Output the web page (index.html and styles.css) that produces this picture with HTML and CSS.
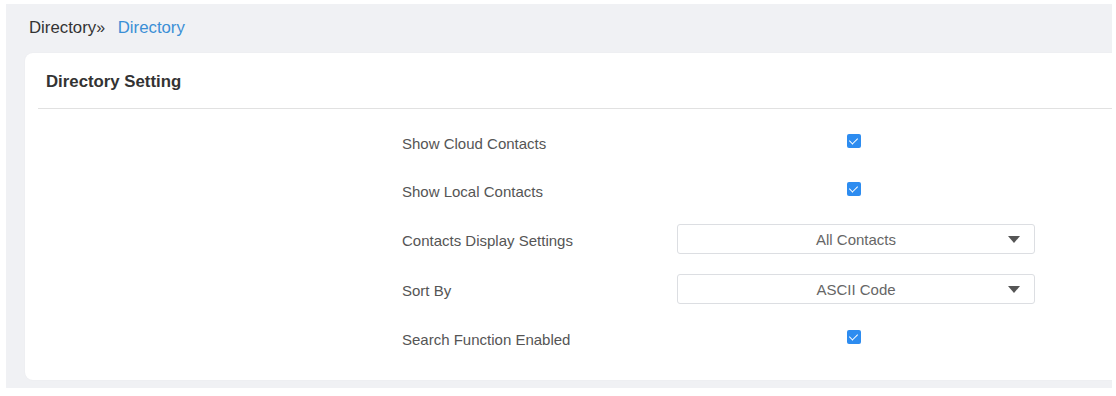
FILE: index.html
```html
<!DOCTYPE html>
<html lang="en">
<head>
    <meta charset="UTF-8">
    <title>Directory</title>
    <link rel="stylesheet" href="styles.css">
</head>
<body>
    <div class="page">
        <div class="breadcrumb">
            <span class="crumb">Directory</span><span class="sep">&raquo;</span>
            <span class="crumb current">Directory</span>
        </div>

        <div class="card">
            <div class="card-header">
                <h2 class="card-title">Directory Setting</h2>
            </div>

            <div class="form">
                <div class="form-row">
                    <label class="form-label">Show Cloud Contacts</label>
                    <div class="form-control">
                        <span class="checkbox checked"></span>
                    </div>
                </div>
                <div class="form-row">
                    <label class="form-label">Show Local Contacts</label>
                    <div class="form-control">
                        <span class="checkbox checked"></span>
                    </div>
                </div>
                <div class="form-row tall">
                    <label class="form-label">Contacts Display Settings</label>
                    <div class="form-control">
                        <div class="select">
                            <span class="select-value">All Contacts</span>
                            <span class="select-arrow"></span>
                        </div>
                    </div>
                </div>
                <div class="form-row tall">
                    <label class="form-label">Sort By</label>
                    <div class="form-control">
                        <div class="select">
                            <span class="select-value">ASCII Code</span>
                            <span class="select-arrow"></span>
                        </div>
                    </div>
                </div>
                <div class="form-row">
                    <label class="form-label">Search Function Enabled</label>
                    <div class="form-control">
                        <span class="checkbox checked"></span>
                    </div>
                </div>
            </div>
        </div>
    </div>
</body>
</html>
```

FILE: styles.css
```css
* {
    margin: 0;
    padding: 0;
    box-sizing: border-box;
    font-family: 'Liberation Sans', Arial, sans-serif;
}

body {
    background-color: #fff;
    padding: 4px 4px 8px 6px;
}

.page {
    background-color: #f0f1f4;
    width: 1106px;
    height: 384px;
    overflow: hidden;
}

.breadcrumb {
    height: 46px;
    line-height: 47px;
    padding-left: 23px;
    font-size: 16.8px;
    color: #333;
}

.breadcrumb .sep {
    margin-right: 8px;
    font-size: 16px;
}

.crumb.current {
    color: #3a8fd6;
}

.card {
    margin: 3px -20px 0 19px;
    background-color: #fff;
    border-radius: 8px;
    padding-bottom: 17px;
    box-shadow: 0 0 2px rgba(0, 0, 0, 0.04);
}

.card-header {
    height: 56px;
    margin-left: 13px;
    padding-left: 8px;
    padding-top: 2px;
    border-bottom: 1px solid #e1e1e1;
    display: flex;
    align-items: center;
}

.card-title {
    font-size: 16.8px;
    font-weight: bold;
    color: #333;
}

.form {
    padding-top: 10px;
}

.form-row {
    height: 48px;
    display: flex;
    align-items: center;
}

.form-row.tall {
    height: 50px;
}

.form-label {
    width: 652px;
    padding-left: 377px;
    font-size: 15px;
    color: #555;
}

.form-control {
    width: 358px;
    display: flex;
    justify-content: center;
}

.checkbox {
    width: 14px;
    height: 14px;
    border-radius: 2px;
    background-color: #2d8cf0;
    position: relative;
    margin-left: -4px;
    margin-top: -5px;
}

.checkbox.checked::after {
    content: '';
    position: absolute;
    left: 4px;
    top: 2px;
    width: 4px;
    height: 7px;
    border: solid #fff;
    border-width: 0 1.5px 1.5px 0;
    transform: rotate(45deg);
}

.select {
    width: 358px;
    height: 30px;
    margin-top: -2px;
    border: 1px solid #dcdee2;
    border-radius: 3px;
    display: flex;
    align-items: center;
    justify-content: center;
    position: relative;
}

.select-value {
    font-size: 15px;
    color: #666;
}

.select-arrow {
    position: absolute;
    right: 14px;
    top: 11px;
    width: 0;
    height: 0;
    border-left: 6.5px solid transparent;
    border-right: 6.5px solid transparent;
    border-top: 7px solid #555;
}
```
